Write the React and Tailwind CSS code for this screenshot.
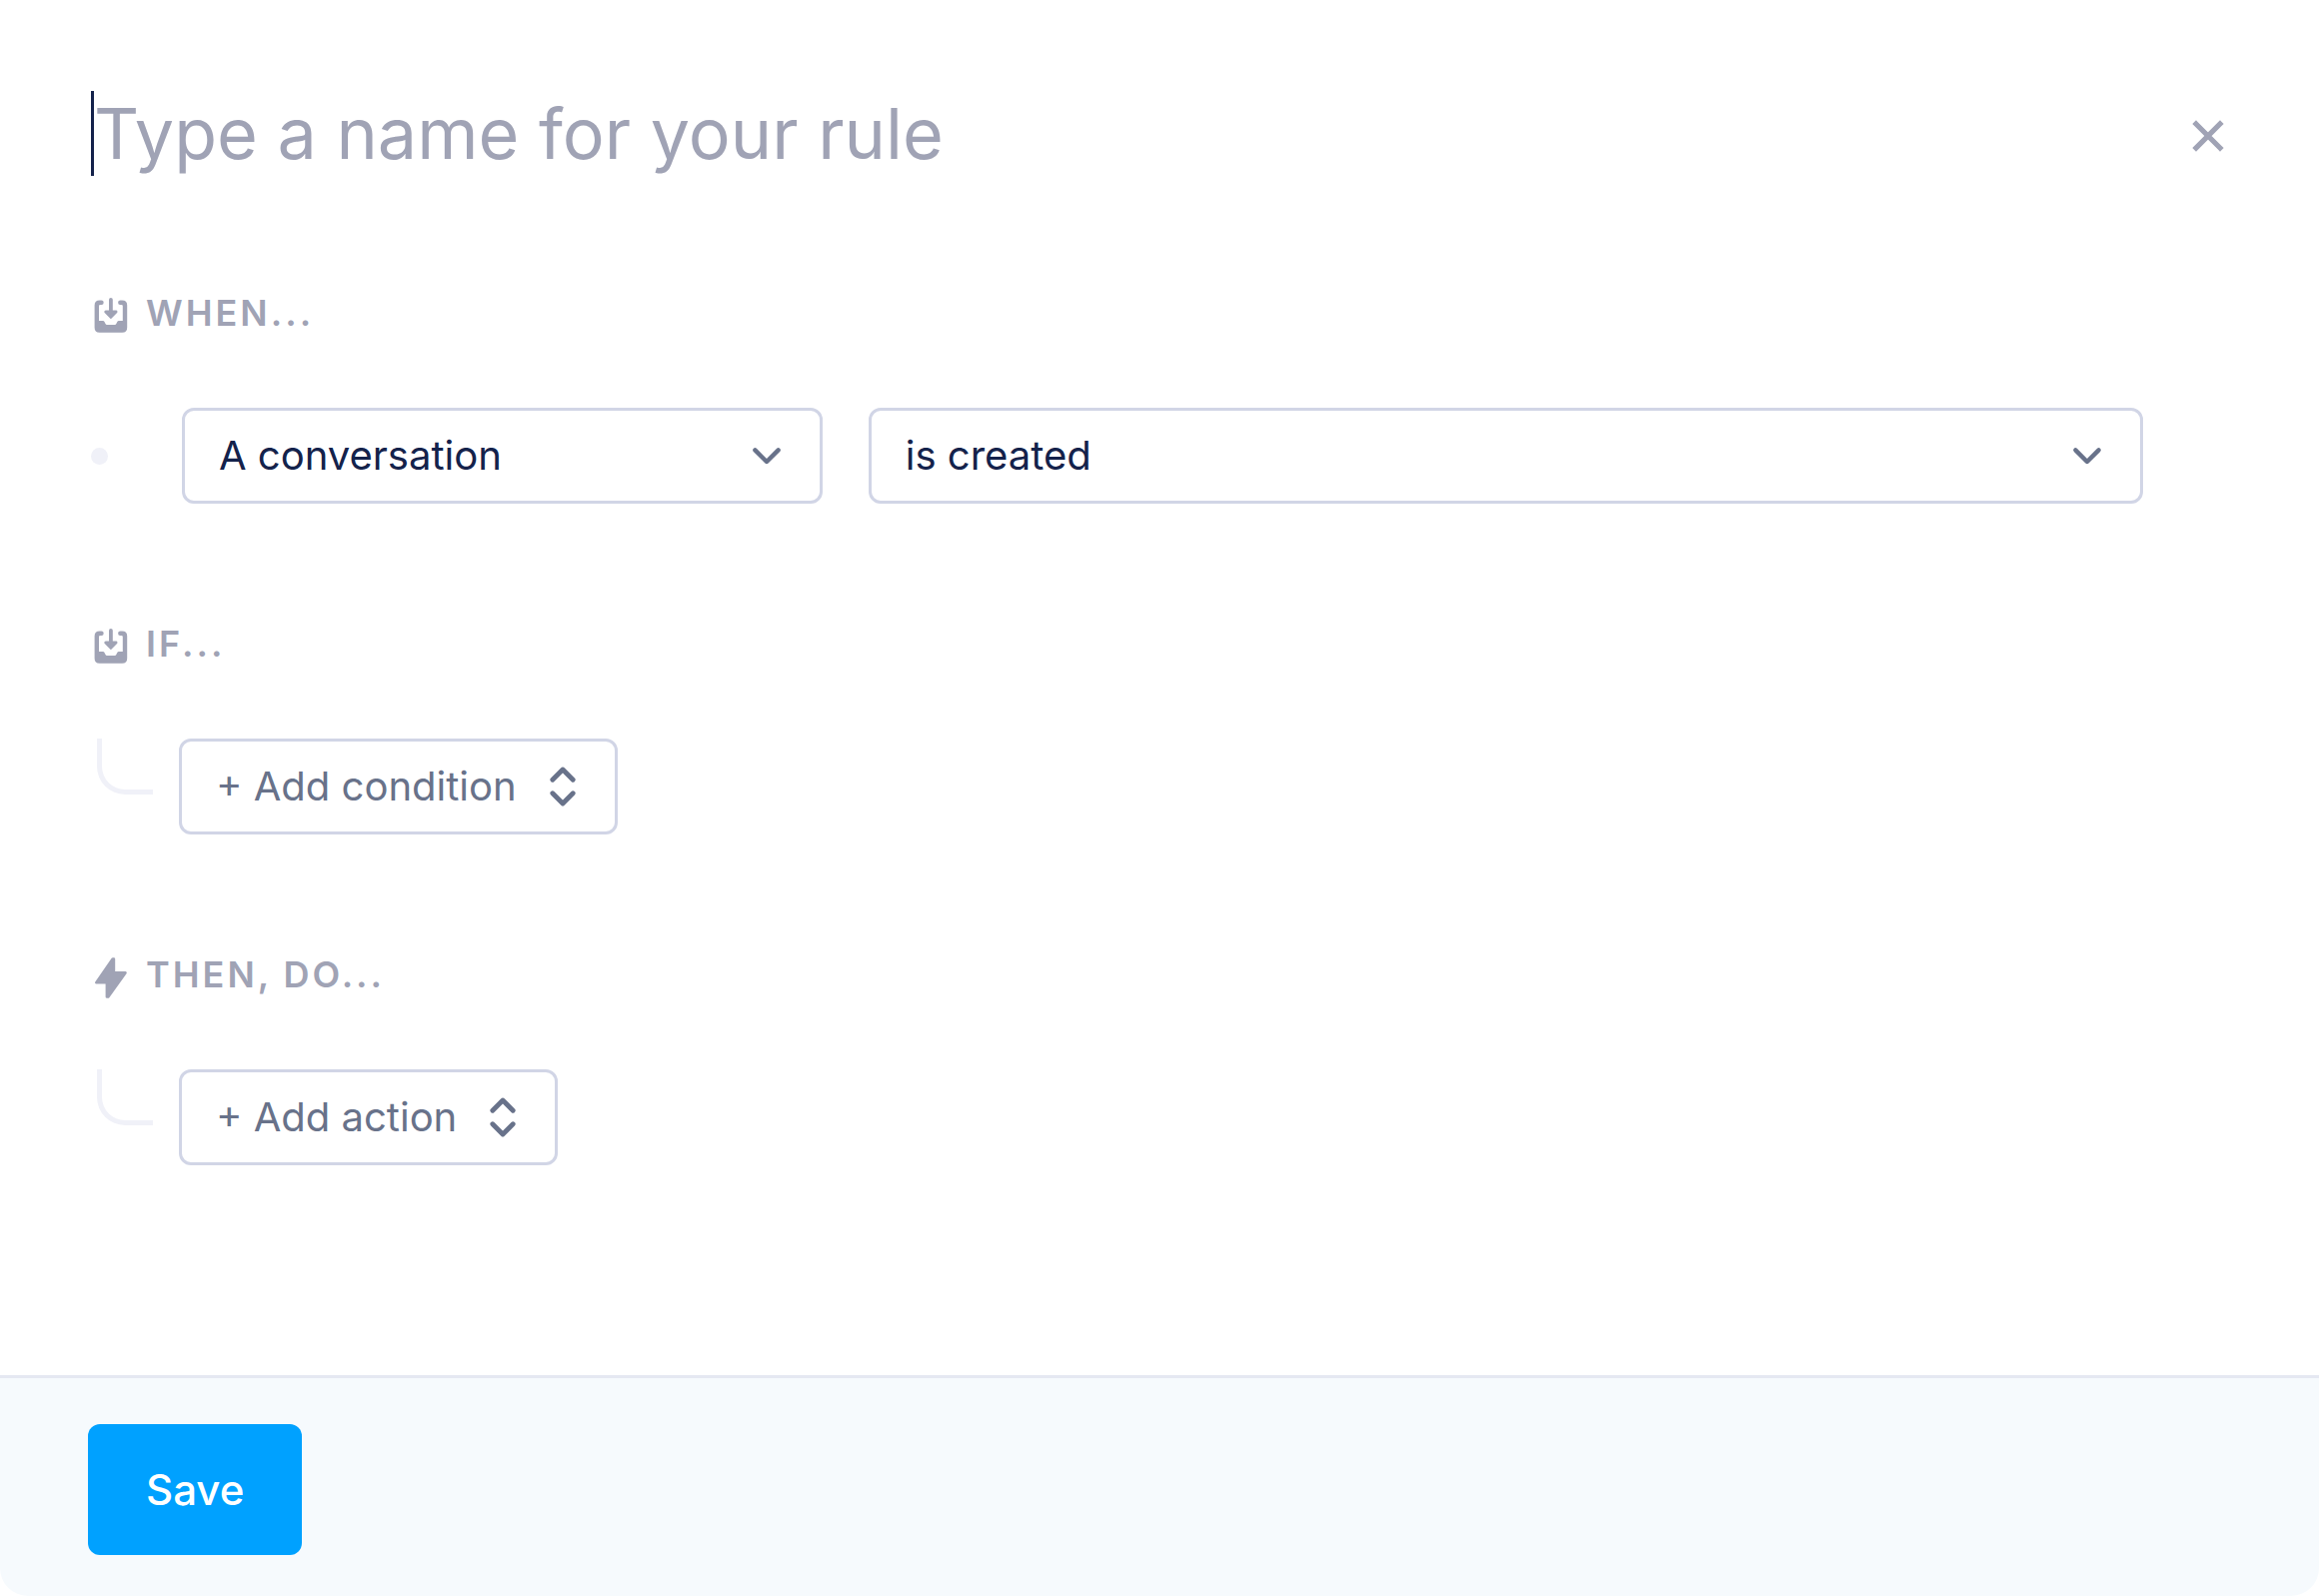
import React, { useState } from 'react';

const conversationOptions = ['A conversation', 'A message', 'A contact'];
const eventOptions = ['is created', 'is updated', 'is closed'];

function InboxIcon() {
    return (
        <svg className="w-9 h-10 shrink-0" viewBox="0 0 36 40" fill="none" aria-hidden="true">
            <path
                d="M7.5 12H6.2Q5 12 5 13.2V28H9Q10 28 10.5 29L11.5 31Q12 32 13 32H20.8Q21.8 32 22.3 31L23.3 29Q23.8 28 24.8 28H28.8V13.2Q28.8 12 27.6 12H26.3A2.2 2.2 0 0 1 26.3 7.6H28.2Q33.2 7.6 33.2 12.6V34.8Q33.2 39.8 28.2 39.8H5.6Q.6 39.8 .6 34.8V12.6Q.6 7.6 5.6 7.6H7.5A2.2 2.2 0 0 1 7.5 12Z"
                fill="currentColor"
            />
            <path d="M16.9 7V19" stroke="currentColor" strokeWidth="3.8" strokeLinecap="round" />
            <path d="M11.7 19H22.1L16.9 24.4Z" fill="currentColor" stroke="currentColor" strokeWidth="2.8" strokeLinejoin="round" />
        </svg>
    );
}

function BoltIcon() {
    return (
        <svg className="w-9 h-10 shrink-0 overflow-visible" viewBox="0 0 36 40" fill="none" aria-hidden="true">
            <path
                d="M18.8 4.6L2.4 28.2H13V42.4H14.2L31.4 18.5H19.8V4.6Z"
                fill="currentColor"
                stroke="currentColor"
                strokeWidth="2.8"
                strokeLinejoin="round"
            />
        </svg>
    );
}

function ChevronDown() {
    return (
        <svg
            className="absolute right-10 top-1/2 -translate-y-1/2 w-8 h-5 text-[#68728a] pointer-events-none"
            viewBox="0 0 32 20"
            fill="none"
            aria-hidden="true"
        >
            <path d="M4.4 4.4L16 16L27.6 4.4" stroke="currentColor" strokeWidth="4.4" strokeLinecap="round" strokeLinejoin="round" />
        </svg>
    );
}

function UpDownIcon() {
    return (
        <svg className="w-7 h-10 shrink-0" viewBox="0 0 28 40" fill="none" stroke="currentColor" strokeWidth="4.8" aria-hidden="true">
            <path d="M3.8 13.2L14 3L24.2 13.2" strokeLinecap="round" strokeLinejoin="round" />
            <path d="M3.8 26.8L14 37L24.2 26.8" strokeLinecap="round" strokeLinejoin="round" />
        </svg>
    );
}

function SectionTitle({ icon, children }) {
    return (
        <h2 className="flex items-center gap-4 pl-[3px] h-11 text-4xl font-semibold tracking-[3px] uppercase text-[#a0a3b5]">
            {icon}
            {children}
        </h2>
    );
}

function SelectBox({ label, options }) {
    return (
        <div className="relative">
            <select
                aria-label={label}
                className="appearance-none block w-full h-24 pl-[34px] pr-24 bg-white border-3 border-[#d1d5e6] rounded-xl text-[40px] text-[#14224b]"
            >
                {options.map((option) => (
                    <option key={option}>{option}</option>
                ))}
            </select>
            <ChevronDown />
        </div>
    );
}

function AddRow({ children }) {
    return (
        <div className="flex items-start">
            <div className="w-[88px] shrink-0 pl-[6px]">
                <div className="w-14 h-14 border-l-[5px] border-b-[5px] border-[#f0f1f8] rounded-bl-[28px]"></div>
            </div>
            <button
                type="button"
                className="flex items-center gap-8 h-24 pl-[34px] pr-[38px] bg-white border-3 border-[#d1d5e6] rounded-xl text-[40px] text-[#68728a]"
            >
                {children}
                <UpDownIcon />
            </button>
        </div>
    );
}

export default function App() {
    const [name, setName] = useState('');

    return (
        <form
            className="flex flex-col min-h-screen bg-white rounded-[28px] overflow-hidden font-['Inter',sans-serif]"
            onSubmit={(e) => e.preventDefault()}
        >
            <div className="flex-1 px-[91px]">
                {/* Rule name */}
                <header className="flex items-center justify-between pt-[91px]">
                    <div className="flex items-center flex-1">
                        <span className="w-[3px] h-[85px] bg-[#14224b]"></span>
                        <input
                            type="text"
                            aria-label="Rule name"
                            placeholder="Type a name for your rule"
                            value={name}
                            onChange={(e) => setName(e.target.value)}
                            className="flex-1 h-[85px] text-[70px] text-[#14224b] placeholder:text-[#a0a3b5] outline-none"
                        />
                    </div>
                    <button type="button" aria-label="Close" className="text-[#a0a3b5]">
                        <svg className="w-10 h-10" viewBox="0 0 40 40" fill="none" aria-hidden="true">
                            <path d="M8 10L32 34M32 10L8 34" stroke="currentColor" strokeWidth="5.2" strokeLinecap="square" />
                        </svg>
                    </button>
                </header>

                {/* Trigger */}
                <section className="mt-[115px]">
                    <SectionTitle icon={<InboxIcon />}>When...</SectionTitle>
                    <div className="flex items-center mt-[73px] pr-[85px]">
                        <div className="w-[91px] shrink-0">
                            <div className="w-[17px] h-[17px] rounded-full bg-[#f0f1f8]"></div>
                        </div>
                        <div className="grid grid-cols-[100fr_199fr] gap-[46px] flex-1">
                            <SelectBox label="Trigger subject" options={conversationOptions} />
                            <SelectBox label="Trigger event" options={eventOptions} />
                        </div>
                    </div>
                </section>

                {/* Conditions */}
                <section className="mt-[118px]">
                    <SectionTitle icon={<InboxIcon />}>If...</SectionTitle>
                    <div className="mt-[73px]">
                        <AddRow>+ Add condition</AddRow>
                    </div>
                </section>

                {/* Actions */}
                <section className="mt-[118px]">
                    <SectionTitle icon={<BoltIcon />}>Then, do...</SectionTitle>
                    <div className="mt-[73px]">
                        <AddRow>+ Add action</AddRow>
                    </div>
                </section>
            </div>

            <footer className="px-[88px] pt-[46px] pb-[41px] bg-[#f6fafd] border-t-3 border-[#e5e8f2]">
                <button type="submit" className="h-[131px] px-[58px] rounded-xl bg-[#00a1ff] text-white text-[42px] font-medium">
                    Save
                </button>
            </footer>
        </form>
    );
}
